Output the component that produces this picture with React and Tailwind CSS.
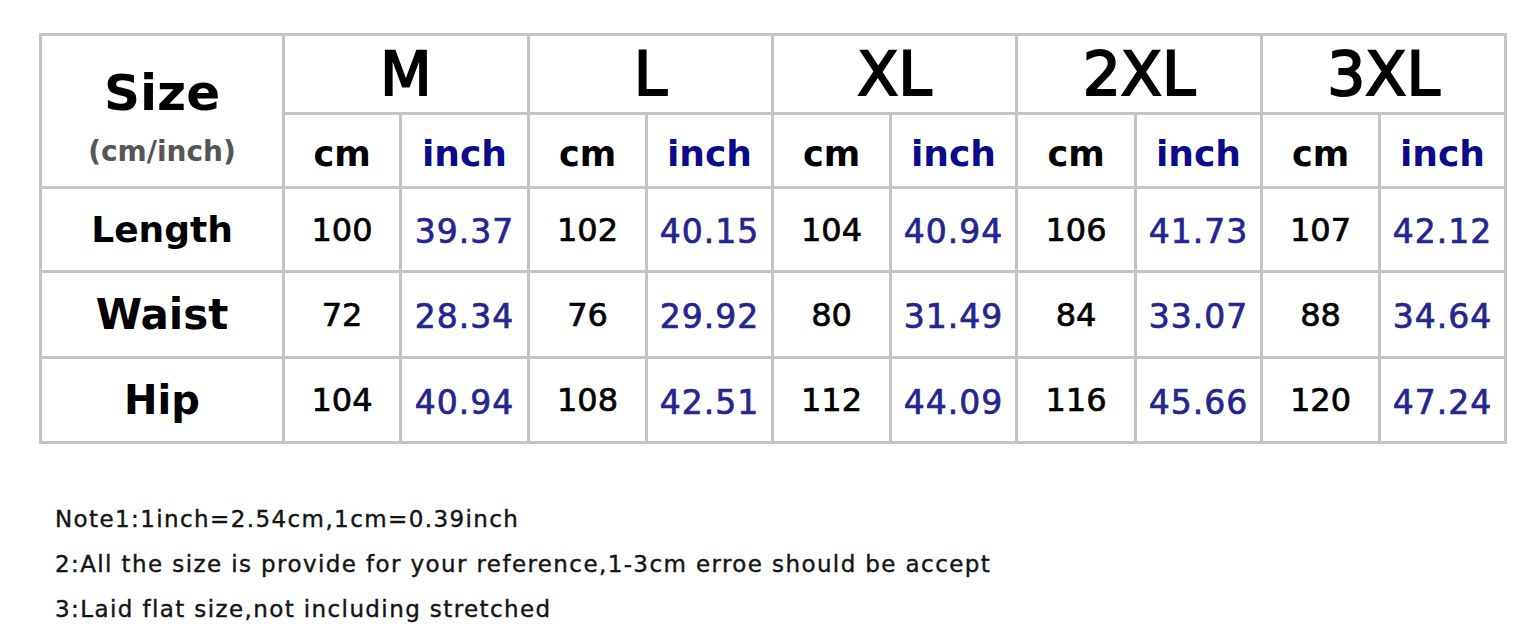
import React from "react";

const sizes = ["M", "L", "XL", "2XL", "3XL"];

const rows = [
    { label: "Length", cls: "text-[36px]", values: [["100", "39.37"], ["102", "40.15"], ["104", "40.94"], ["106", "41.73"], ["107", "42.12"]] },
    { label: "Waist", cls: "text-[42px]", values: [["72", "28.34"], ["76", "29.92"], ["80", "31.49"], ["84", "33.07"], ["88", "34.64"]] },
    { label: "Hip", cls: "text-[40px]", values: [["104", "40.94"], ["108", "42.51"], ["112", "44.09"], ["116", "45.66"], ["120", "47.24"]] },
];

const notes = [
    "Note1:1inch=2.54cm,1cm=0.39inch",
    "2:All the size is provide for your reference,1-3cm erroe should be accept",
    "3:Laid flat size,not including stretched",
];

export default function App() {
    return (
        <div className="w-[1539px] h-[643px] bg-white overflow-hidden font-['Comic_Sans_MS','DejaVu_Sans',sans-serif]">
            <div className="pt-[33px] pl-[39px]">
                <div className="inline-grid grid-cols-[240px_114px_125px_115px_123px_115px_123px_116px_123px_115px_123px] grid-rows-[76px_71px_81px_83px_82px] gap-[3px] p-[3px] bg-[#c4c4c4]">
                    {/* corner cell */}
                    <div className="row-span-2 bg-white flex flex-col items-center justify-center pt-[12px]">
                        <span className="text-[50px] font-bold leading-none text-black">Size</span>
                        <span className="mt-[20px] text-[28px] font-bold leading-none text-[#555555]">(cm/inch)</span>
                    </div>
                    {sizes.map((s) => (
                        <div key={s} className="col-span-2 bg-white flex items-center justify-center">
                            <span className="text-[60px] leading-none text-black [-webkit-text-stroke:2px_black]">{s}</span>
                        </div>
                    ))}
                    {sizes.map((s) => (
                        <React.Fragment key={s + "-units"}>
                            <div className="bg-white flex items-center justify-center pt-[8px]">
                                <span className="text-[35px] font-bold leading-none text-black">cm</span>
                            </div>
                            <div className="bg-white flex items-center justify-center pt-[6px]">
                                <span className="text-[36px] font-bold leading-none text-[#0b0b8a]">inch</span>
                            </div>
                        </React.Fragment>
                    ))}
                    {rows.map((row) => (
                        <React.Fragment key={row.label}>
                            <div className="bg-white flex items-center justify-center">
                                <span className={`${row.cls} font-bold leading-none text-black`}>{row.label}</span>
                            </div>
                            {row.values.map(([cm, inch], i) => (
                                <React.Fragment key={i}>
                                    <div className="bg-white flex items-center justify-center">
                                        <span className="text-[32px] leading-none text-black [-webkit-text-stroke:0.7px_black]">{cm}</span>
                                    </div>
                                    <div className="bg-white flex items-center justify-center pt-[4px]">
                                        <span className="text-[33px] leading-none tracking-[1px] text-[#25258f] [-webkit-text-stroke:0.7px_#25258f]">{inch}</span>
                                    </div>
                                </React.Fragment>
                            ))}
                        </React.Fragment>
                    ))}
                </div>
            </div>
            <div className="mt-[53px] pl-[55px]">
                {notes.map((n) => (
                    <p key={n} className="text-[23px] leading-[45px] text-[#141414] tracking-[1.4px] [-webkit-text-stroke:0.4px_#141414]">
                        {n}
                    </p>
                ))}
            </div>
        </div>
    );
}
